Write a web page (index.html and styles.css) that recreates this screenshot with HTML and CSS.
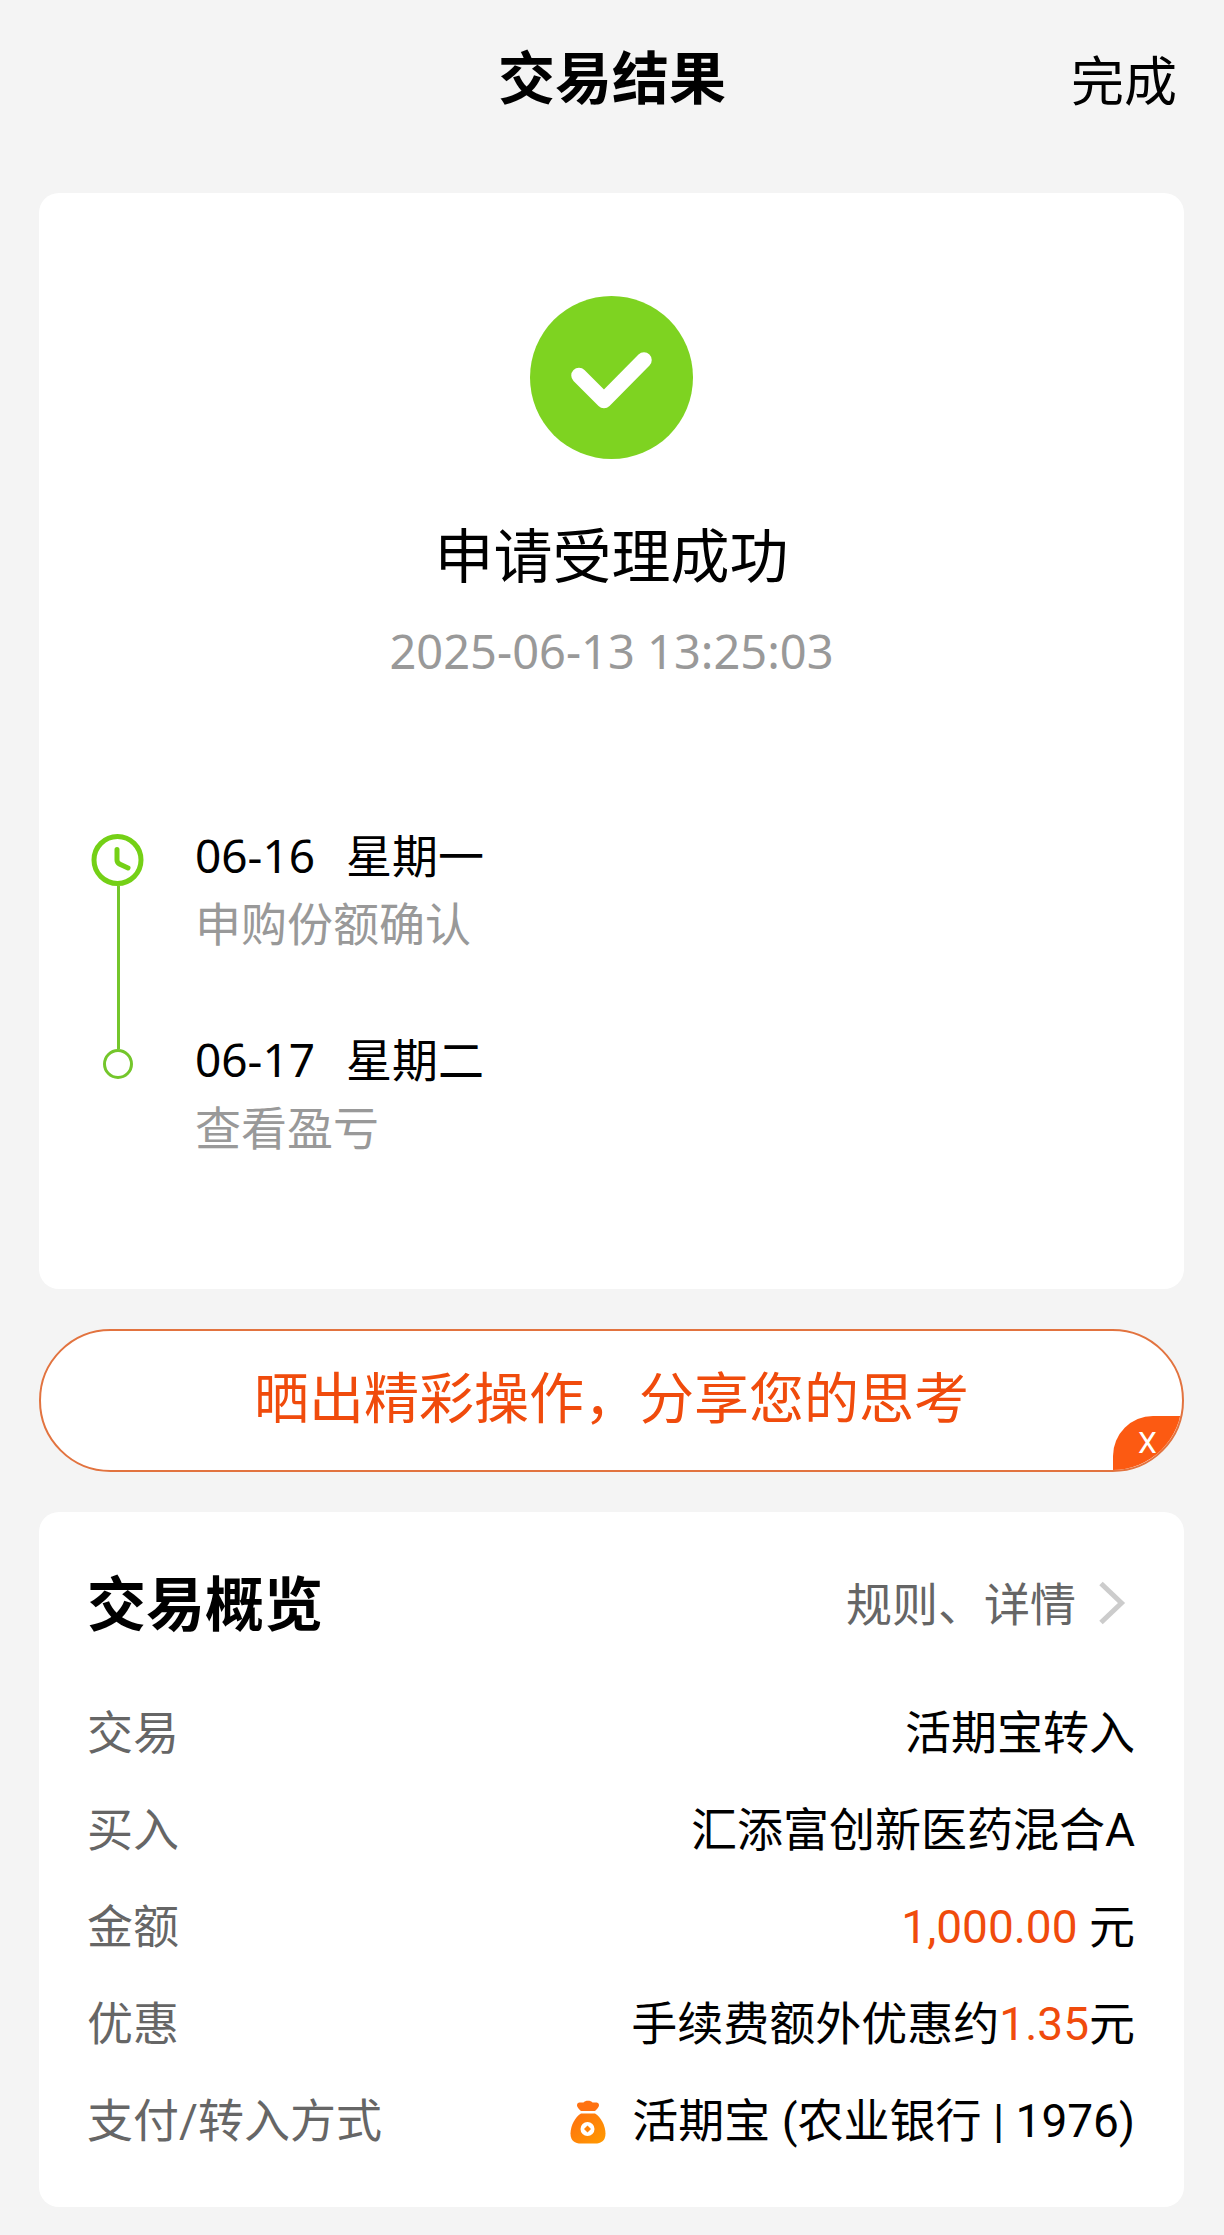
FILE: index.html
```html
<!DOCTYPE html>
<html lang="zh-CN">
<head>
<meta charset="utf-8">
<meta name="viewport" content="width=device-width, initial-scale=1">
<title>交易结果</title>
<link rel="stylesheet" href="styles.css">
</head>
<body>
<header class="topbar">
  <h1 class="topbar-title">交易结果</h1>
  <button class="topbar-done" type="button">完成</button>
</header>
<main class="content">
  <section class="card result">
    <svg class="result-icon" viewBox="0 0 163 163" aria-hidden="true">
      <circle cx="81.500" cy="81.500" r="81.500" fill="#7ed321"/>
      <path d="M49 79.500 74 104.500 114 64" fill="none" stroke="#fff" stroke-width="15.500" stroke-linecap="round" stroke-linejoin="round"/>
    </svg>
    <h2 class="result-title">申请受理成功</h2>
    <time class="result-time" datetime="2025-06-13T13:25:03">2025-06-13 13:25:03</time>
    <ol class="timeline">
      <li class="step">
        <div class="rail">
          <svg class="rail-clock" viewBox="0 0 54 54" aria-hidden="true">
            <circle cx="26.500" cy="27" r="23.500" fill="none" stroke="#74d016" stroke-width="5"/>
            <path d="M26 16.500V27Q26 29.500 28.500 31L37 35" fill="none" stroke="#74d016" stroke-width="5" stroke-linecap="round"/>
          </svg>
          <span class="rail-line"></span>
        </div>
        <div class="step-text">
          <p class="step-date"><span>06-16</span><span>星期一</span></p>
          <p class="step-note">申购份额确认</p>
        </div>
      </li>
      <li class="step">
        <div class="rail">
          <span class="rail-line rail-line-short"></span>
          <span class="rail-dot"></span>
        </div>
        <div class="step-text">
          <p class="step-date"><span>06-17</span><span>星期二</span></p>
          <p class="step-note">查看盈亏</p>
        </div>
      </li>
    </ol>
  </section>

  <div class="share">
    <button class="share-main" type="button">晒出精彩操作，分享您的思考</button>
    <button class="share-close" type="button" aria-label="关闭">X</button>
  </div>

  <section class="card overview">
    <div class="overview-head">
      <h2 class="overview-title">交易概览</h2>
      <a class="overview-link" href="#detail">规则、详情
        <svg class="chevron" viewBox="0 0 28 44" aria-hidden="true">
          <path d="M3 2.500 23.500 22 3 41.500" fill="none" stroke="#ccc" stroke-width="5"/>
        </svg>
      </a>
    </div>
    <dl class="rows">
      <div class="row"><dt>交易</dt><dd>活期宝转入</dd></div>
      <div class="row"><dt>买入</dt><dd>汇添富创新医药混合A</dd></div>
      <div class="row"><dt>金额</dt><dd><span class="accent">1,000.00</span> 元</dd></div>
      <div class="row"><dt>优惠</dt><dd>手续费额外优惠约<span class="accent">1.35</span>元</dd></div>
      <div class="row"><dt>支付/转入方式</dt><dd class="pay">
        <svg class="bag" viewBox="0 0 36 44" aria-hidden="true">
          <defs><linearGradient id="bagFill" x1="0" y1="0" x2="1" y2="1"><stop offset="0" stop-color="#ff6f10"/><stop offset="1" stop-color="#ff9b00"/></linearGradient></defs>
          <path d="M11 11C8 8 6 6 7.500 3.500 9 1.500 12 3 13.500 2.500 15 0 21 0 22.500 2.500 24 3 27 1.500 28.500 3.500 30 6 28 8 25 11Z" fill="#ff7212"/>
          <path d="M11 13.500H25C31 17 35.500 26 35.500 33.500 35.500 41 31 43.500 25 43.500H11C5 43.500 .5 41 .5 33.500 .5 26 5 17 11 13.500Z" fill="url(#bagFill)"/>
          <circle cx="17.500" cy="29" r="7" fill="#fff"/>
          <path d="M17.500 25.500 21 29 17.500 32.500 14 29Z" fill="#ff8408"/>
        </svg>
        <span>活期宝 (农业银行 | 1976)</span></dd></div>
    </dl>
  </section>
</main>
</body>
</html>
```
FILE: styles.css
```css
* {
  box-sizing: border-box;
}

body {
  margin: 0;
  background: #f4f4f4;
  color: #000;
  font-family: "Noto Sans", "Noto Sans CJK SC", sans-serif;
  font-size: 46px;
}

h1, h2, p, ol, dl, dd {
  margin: 0;
  padding: 0;
}

button {
  margin: 0;
  padding: 0;
  border: 0;
  background: none;
  color: inherit;
  font-family: inherit;
  cursor: pointer;
}

.topbar {
  display: grid;
  grid-template-columns: 1fr auto 1fr;
  align-items: end;
  padding: 33px 47px 72px;
}

.topbar-title {
  grid-column: 2;
  font-size: 57px;
  font-weight: 700;
  line-height: 88px;
}

.topbar-done {
  justify-self: end;
  font-size: 53px;
  line-height: 80px;
}

.content {
  display: flex;
  flex-direction: column;
  gap: 40px;
  padding: 0 40px 28px 39px;
}

.card {
  border-radius: 20px;
  background: #fff;
}

.result {
  display: flex;
  flex-direction: column;
  align-items: center;
  padding: 103px 52px 128px;
}

.result-icon {
  width: 163px;
  height: 163px;
}

.result-title {
  margin-top: 56px;
  font-size: 59px;
  font-weight: 400;
  line-height: 80px;
}

.result-time {
  margin-top: 24px;
  color: #999;
  font-size: 47px;
  line-height: 64px;
}

.timeline {
  align-self: stretch;
  margin-top: 138px;
  list-style: none;
}

.step {
  display: flex;
  gap: 50px;
}

.step + .step .step-text {
  padding-bottom: 0;
}

.step-text {
  padding-bottom: 68px;
  line-height: 68px;
}

.step-date {
  display: flex;
  gap: 31px;
}

.step-note {
  color: #999;
}

.rail {
  display: flex;
  flex-direction: column;
  align-items: center;
  width: 54px;
}

.rail-clock {
  width: 54px;
  height: 54px;
  margin-top: 12px;
}

.rail-line {
  flex: 1;
  width: 3px;
  margin-top: -1px;
  background: #74c62b;
}

.rail-line-short {
  flex: none;
  height: 25px;
}

.rail-dot {
  width: 30px;
  height: 30px;
  border: 3px solid #74c62b;
  border-radius: 50%;
}

.share {
  position: relative;
  overflow: hidden;
  border: 2px solid #e2733f;
  border-radius: 72px;
  background: #fff;
}

.share-main {
  display: block;
  width: 100%;
  padding: 26px 0 33px;
  color: #f04b0c;
  font-size: 55px;
  line-height: 80px;
}

.share-close {
  position: absolute;
  right: 0;
  bottom: 0;
  width: 69px;
  height: 54px;
  border-radius: 40px 0 0 0;
  background: #fc5a12;
  color: #fff;
  font-family: Roboto, sans-serif;
  font-size: 30px;
  line-height: 54px;
}

.overview {
  padding: 47px 49px 37px 48px;
}

.overview-head {
  display: flex;
  align-items: center;
  justify-content: space-between;
  margin-bottom: 38px;
}

.overview-title {
  font-size: 59px;
  font-weight: 700;
  line-height: 88px;
}

.overview-link {
  display: flex;
  align-items: center;
  gap: 22px;
  padding-right: 9px;
  color: #666;
  line-height: 88px;
  text-decoration: none;
}

.chevron {
  width: 28px;
  height: 44px;
}

.rows {
  font-family: Roboto, "Noto Sans CJK SC", sans-serif;
}

.row {
  display: flex;
  justify-content: space-between;
  line-height: 97px;
}

.row dt {
  color: #666;
}

.accent {
  color: #f04b0c;
}

.pay {
  display: flex;
  align-items: center;
  gap: 26px;
}

.bag {
  width: 36px;
  height: 44px;
}
```
